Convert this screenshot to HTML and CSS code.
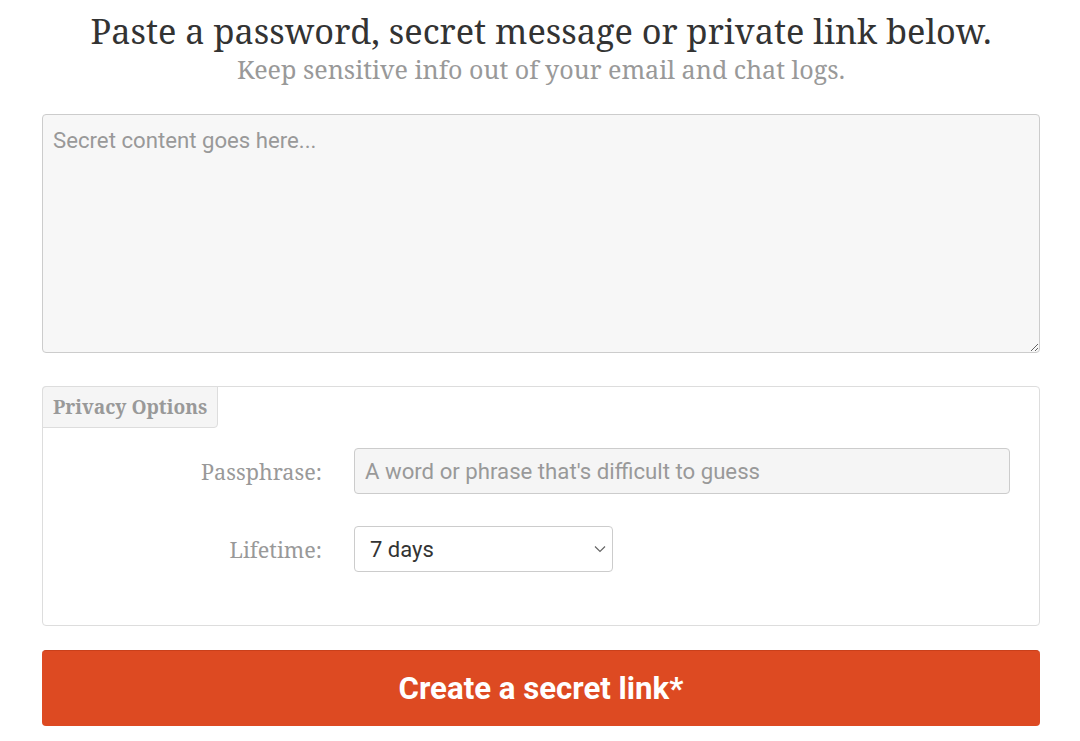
FILE: index.html
```html
<!DOCTYPE html>
<html>
<head>
  <title>Share a secret</title>
  <link rel="stylesheet" href="styles.css">
</head>
<body>
  <div class="container">
    <div class="intro">
      <h1>Paste a password, secret message or private link below.</h1>
      <p class="tagline">Keep sensitive info out of your email and chat logs.</p>
    </div>

    <textarea class="secret-input" placeholder="Secret content goes here..."></textarea>

    <div class="options-card">
      <div class="options-legend">Privacy Options</div>
      <div class="options-body">
        <div class="option-row">
          <label class="option-label" for="passphrase">Passphrase:</label>
          <input class="text-field" id="passphrase" type="text" placeholder="A word or phrase that's difficult to guess">
        </div>
        <div class="option-row">
          <label class="option-label" for="lifetime">Lifetime:</label>
          <div class="select-wrap">
            <select class="select-field" id="lifetime">
              <option>7 days</option>
            </select>
            <svg class="select-caret" width="12" height="8" viewBox="0 0 12 8">
              <path d="M1 1.5l5 5 5-5" fill="none" stroke="#666" stroke-width="1.2"/>
            </svg>
          </div>
        </div>
      </div>
    </div>

    <button class="primary-button">Create a secret link*</button>
  </div>
</body>
</html>
```

FILE: styles.css
```css
:root {
  --serif: "Noto Serif", "DejaVu Serif", serif;
  --sans: Roboto, "Liberation Sans", sans-serif;
  --text: #333333;
  --text-light: #999999;
  --border: #cccccc;
  --border-light: #dddddd;
  --field-bg: #f7f7f7;
  --primary: #dd4a22;
  --radius: 4px;
}

* {
  box-sizing: border-box;
}

body {
  margin: 0;
  background: #ffffff;
  color: var(--text);
  font-family: var(--sans);
}

.container {
  display: flex;
  flex-direction: column;
  padding: 10px 40px 0 42px;
}

.intro {
  text-align: center;
}

.intro h1 {
  margin: 0;
  font-family: var(--serif);
  font-weight: 400;
  font-size: 34.3px;
  line-height: 42px;
  color: #333333;
}

.tagline {
  margin: 0;
  font-family: var(--serif);
  font-size: 25.1px;
  line-height: 34px;
  color: var(--text-light);
}

.secret-input {
  margin-top: 28px;
  width: 100%;
  height: 239px;
  padding: 12px 10px;
  background: var(--field-bg);
  border: 1px solid var(--border);
  border-radius: var(--radius);
  font-family: var(--sans);
  font-size: 22.2px;
  color: var(--text);
  resize: vertical;
}

.secret-input::placeholder,
.text-field::placeholder {
  color: var(--text-light);
}

.options-card {
  margin-top: 33px;
  height: 240px;
  border: 1px solid var(--border-light);
  border-radius: var(--radius);
}

.options-legend {
  display: inline-block;
  margin: -1px 0 0 -1px;
  padding: 8px 10px;
  background: #f5f5f5;
  border: 1px solid var(--border-light);
  border-radius: var(--radius) 0 var(--radius) 0;
  font-family: var(--serif);
  font-weight: 700;
  font-size: 19.2px;
  line-height: 24px;
  color: var(--text-light);
}

.options-body {
  display: flex;
  flex-direction: column;
  gap: 32px;
  padding-top: 20px;
}

.option-row {
  display: grid;
  grid-template-columns: 279px 656px;
  column-gap: 32px;
  align-items: center;
}

.option-label {
  text-align: right;
  font-family: var(--serif);
  font-size: 21.6px;
  color: var(--text-light);
}

.text-field {
  height: 46px;
  padding: 0 10px;
  background: #f5f5f5;
  border: 1px solid var(--border);
  border-radius: var(--radius);
  font-family: var(--sans);
  font-size: 22.2px;
  color: var(--text);
}

.select-wrap {
  position: relative;
  width: 259px;
}

.select-field {
  appearance: none;
  width: 100%;
  height: 46px;
  padding: 0 30px 0 15px;
  background: #ffffff;
  border: 1px solid var(--border);
  border-radius: var(--radius);
  font-family: var(--sans);
  font-size: 22px;
  color: var(--text);
}

.select-caret {
  position: absolute;
  right: 7px;
  top: 19px;
  pointer-events: none;
}

.primary-button {
  margin-top: 24px;
  height: 76px;
  width: 100%;
  background: var(--primary);
  color: #ffffff;
  border: none;
  border-top: 1px solid #c9401b;
  border-radius: var(--radius);
  font-family: var(--sans);
  font-weight: 700;
  font-size: 31.2px;
  cursor: pointer;
}
```
